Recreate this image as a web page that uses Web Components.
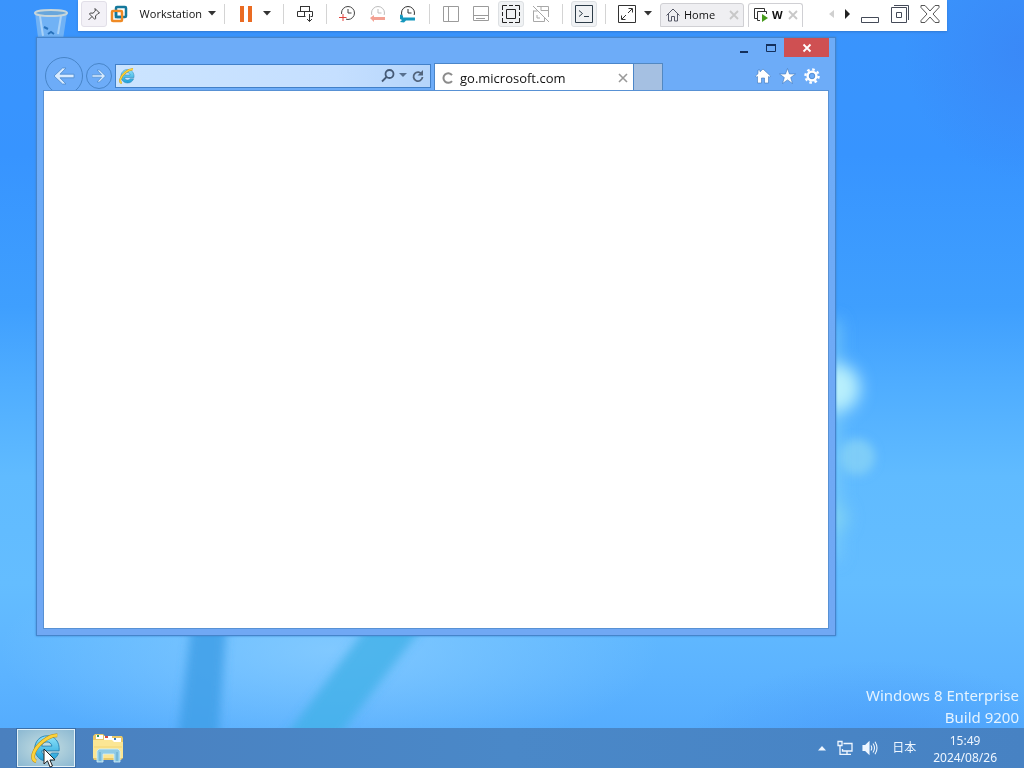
<!DOCTYPE html>
<html lang="en">
<head>
<meta charset="utf-8">
<title>Desktop</title>
<style>
  html, body {
    margin: 0;
    height: 100%;
    overflow: hidden;
  }
  body {
    font-family: "Open Sans", "Noto Sans", "Noto Sans CJK JP", sans-serif;
    font-size: 12px;
    line-height: 16px;
    color: #111;
  }
</style>
</head>
<body>
<desktop-screen>
  <recycle-bin></recycle-bin>
  <browser-window tab-title="go.microsoft.com"></browser-window>
  <vm-toolbar></vm-toolbar>
  <build-watermark slot="footer">
    <span>Windows 8 Enterprise</span>
    <span>Build 9200</span>
  </build-watermark>
  <task-bar slot="footer" time="15:49" date="2024/08/26" lang-label="日本"></task-bar>
</desktop-screen>

<script>
const BUTTON_RESET = `
  button {
    box-sizing: border-box;
    margin: 0;
    padding: 0;
    border: 0;
    background: none;
    font: inherit;
    color: inherit;
    display: flex;
    align-items: center;
    justify-content: center;
  }
  svg { display: block; flex: none; }
`;

// Internet Explorer logo, shared by the address bar and the task bar
const IE_LOGO = (size, id) => `
  <svg width="${size}" height="${size}" viewBox="0 0 32 32" aria-hidden="true">
    <defs>
      <linearGradient id="${id}" x1="0" y1="0" x2="0" y2="1">
        <stop offset="0" stop-color="#8fe3fa"/>
        <stop offset="1" stop-color="#1d9fd8"/>
      </linearGradient>
    </defs>
    <path d="M17 3C9.500 3 4 9 4 16.500S9.500 30 17 30c6 0 10.500-3.500 12.300-8.500h-7.300c-1 1.700-2.800 2.500-5 2.500-3.300 0-5.500-2-5.700-5H30C30.800 9.500 25.500 3 17 3zM11.400 14c.5-2.800 2.600-4.500 5.500-4.500s5 1.700 5.400 4.500z"
      fill="url(#${id})" stroke="#2583b4" stroke-width="1"/>
    <path d="M28 2.500C19 2 5 13 2.500 23c-.8 4 .5 6.500 3 7" fill="none" stroke="#b98a12" stroke-width="4"/>
    <path d="M28 2.500C19 2 5 13 2.500 23c-.8 4 .5 6.500 3 7" fill="none" stroke="#fcd23c" stroke-width="3"/>
  </svg>`;

class DesktopScreen extends HTMLElement {
  constructor() {
    super();
    this.attachShadow({ mode: "open" }).innerHTML = `
      <style>
        :host {
          display: flex;
          flex-direction: column;
          justify-content: flex-end;
          position: relative;
          height: 100vh;
          overflow: hidden;
        }
        .wallpaper {
          position: absolute;
          inset: 0;
          width: 100%;
          height: 100%;
        }
        footer {
          position: relative;
          display: flex;
          flex-direction: column;
        }
      </style>
      <svg class="wallpaper" viewBox="0 0 1024 768" preserveAspectRatio="none" aria-hidden="true">
        <defs>
          <linearGradient id="sky" x1="0" y1="0" x2="0" y2="1">
            <stop offset="0" stop-color="#3a94fc"/>
            <stop offset=".2" stop-color="#3794ff"/>
            <stop offset=".4" stop-color="#3f9ffe"/>
            <stop offset=".5" stop-color="#4fadff"/>
            <stop offset=".62" stop-color="#60bbff"/>
            <stop offset=".76" stop-color="#64bdff"/>
            <stop offset=".88" stop-color="#5cb3ff"/>
            <stop offset="1" stop-color="#50a8fd"/>
          </linearGradient>
          <radialGradient id="light">
            <stop offset="0" stop-color="#8ccfff" stop-opacity=".75"/>
            <stop offset="1" stop-color="#8ccfff" stop-opacity="0"/>
          </radialGradient>
          <radialGradient id="shade">
            <stop offset="0" stop-color="#3a86f6" stop-opacity=".8"/>
            <stop offset="1" stop-color="#3a86f6" stop-opacity="0"/>
          </radialGradient>
          <filter id="soft" x="-50%" y="-50%" width="200%" height="200%">
            <feGaussianBlur stdDeviation="5"/>
          </filter>
          <filter id="glow" x="-50%" y="-50%" width="200%" height="200%">
            <feGaussianBlur stdDeviation="8"/>
          </filter>
        </defs>
        <rect width="1024" height="768" fill="url(#sky)"/>
        <ellipse cx="330" cy="650" rx="330" ry="110" fill="url(#light)"/>
        <ellipse cx="1024" cy="50" rx="120" ry="130" fill="url(#shade)"/>
        <ellipse cx="880" cy="760" rx="200" ry="100" fill="url(#shade)" opacity=".5"/>
        <g filter="url(#soft)">
          <path d="M192 620H227L216 768H174z" fill="#3f9fe8" opacity=".85"/>
          <path d="M372 620H428L336 740 300 768H262z" fill="#42b0e8" opacity=".8"/>
          <circle cx="857" cy="457" r="18" fill="#7fcdf8"/>
        </g>
        <g filter="url(#glow)">
          <path d="M826 320h14v240h-14z" fill="#7fd0fa" opacity=".7"/>
          <ellipse cx="838" cy="388" rx="22" ry="24" fill="#b8effc"/>
          <circle cx="833" cy="518" r="15" fill="#7fd0f4"/>
        </g>
      </svg>
      <slot></slot>
      <footer><slot name="footer"></slot></footer>
    `;
  }
}

class RecycleBin extends HTMLElement {
  constructor() {
    super();
    this.attachShadow({ mode: "open" }).innerHTML = `
      <style>
        :host {
          display: block;
          position: absolute;
          left: 32px;
          top: 6px;
        }
        svg { display: block; }
      </style>
      <svg width="40" height="40" viewBox="0 0 40 40" role="img" aria-label="Recycle Bin">
        <path d="M3 7L7 40H30L35 7z" fill="#7fb9f2" opacity=".8"/>
        <path d="M8 10l3 20M29 10l-3 18" stroke="#a9d2f8" stroke-width="2"/>
        <ellipse cx="19" cy="7" rx="16" ry="3" fill="#68a6dc" stroke="#c8d6da" stroke-width="2"/>
        <path d="M12 21l4 2M16 28l3-2 3 2" fill="none" stroke="#2872bc" stroke-width="2"/>
      </svg>
    `;
  }
}

class ToolButton extends HTMLElement {
  connectedCallback() {
    if (this.shadowRoot) return;
    this.attachShadow({ mode: "open" }).innerHTML = `
      <style>
        ${BUTTON_RESET}
        :host {
          display: block;
          width: 26px;
          flex: none;
        }
        :host([narrow]) { width: 16px; }
        :host([wide]) { width: 30px; }
        button { width: 100%; height: 26px; border: 1px solid transparent; border-radius: 3px; }
        :host([pressed]) button { background: #f0f2f4; border-color: #dde0e3; }
        :host([pinned]) button { background: #f3f1f7; border-color: #e2dfe8; }
      </style>
      <button type="button" aria-label="${this.getAttribute("label")}"><slot></slot></button>
    `;
  }
}

class VmTab extends HTMLElement {
  connectedCallback() {
    if (this.shadowRoot) return;
    this.attachShadow({ mode: "open" }).innerHTML = `
      <style>
        ${BUTTON_RESET}
        :host {
          box-sizing: border-box;
          display: flex;
          align-items: center;
          flex: none;
          height: 24px;
          margin-top: 2px;
          padding: 0 4px 0 5px;
          border: 1px solid #d0d0d4;
          border-bottom: 0;
          border-radius: 3px 3px 0 0;
          background: #fff;
          font-size: 11px;
        }
        :host([inactive]) { background: #efeff2; border-bottom: 1px solid #d0d0d4; }
        .name { flex: 1; gap: 4px; justify-content: flex-start; }
      </style>
      <button class="name" type="button"><slot name="icon"></slot><slot></slot></button>
      <button type="button" aria-label="Close tab">
        <svg width="10" height="12" viewBox="0 0 10 12"><path d="M1 2l8 8M9 2l-8 8" stroke="#c8c8c8" stroke-width="1.800"/></svg>
      </button>
    `;
  }
}

class VmToolbar extends HTMLElement {
  constructor() {
    super();
    const caret = `<svg width="8" height="5" viewBox="0 0 8 5"><path d="M0 0h8L4 4.500z" fill="#333"/></svg>`;
    const clock = (hands) => `<circle cx="9" cy="8" r="6.500" fill="none" stroke="${hands}"/><path d="M9 4v4h3.500" fill="none" stroke="${hands}"/>`;
    this.attachShadow({ mode: "open" }).innerHTML = `
      <style>
        ${BUTTON_RESET}
        :host {
          box-sizing: border-box;
          position: absolute;
          left: 78px;
          right: 77px;
          top: 0;
          display: flex;
          align-items: center;
          padding: 0 2px 4px 3px;
          height: 31px;
          background: #fff;
          box-shadow: 0 1px 2px #2f79d2;
        }
        .menu { width: 109px; height: 26px; padding: 0 0 0 3px; justify-content: flex-start; gap: 6px; font-size: 11px; }
        .menu span { flex: 1; text-align: right; }
        .sep { flex: none; width: 1px; height: 20px; margin: 0 8px; background: #d4d4d4; }
        .group { display: flex; gap: 4px; }
        .tabs { display: flex; gap: 4px; margin-left: 4px; flex: 1; }
        .home { width: 84px; }
        .guest { width: 55px; font-weight: bold; }
      </style>
      <tool-button label="Pin toolbar" pinned>
        <svg width="14" height="14" viewBox="0 0 14 14" fill="none" stroke="#444"><path d="M8 1.500l4.500 4.500-1.500.5-2.500 2.500.2 2.500-1 .8L2.500 7l.8-1 2.700.2L8.300 4zM5 9.500L1.500 13"/></svg>
      </tool-button>
      <button class="menu" type="button">
        <svg width="18" height="18" viewBox="0 0 18 18" fill="none" stroke-width="2.500">
          <rect x="6" y="2" width="10" height="10" rx="1" stroke="#14789c"/>
          <rect x="2" y="6" width="10" height="10" rx="1" stroke="#ef8a25"/>
          <path d="M6 7v5h5" stroke="#14789c"/>
        </svg>
        <span>Workstation</span>
        ${caret}
      </button>
      <i class="sep"></i>
      <tool-button label="Suspend"><svg width="14" height="16" viewBox="0 0 14 16"><path d="M1 0h4v16H1zM9 0h4v16H9z" fill="#ea6b22"/></svg></tool-button>
      <tool-button label="Power options" narrow>${caret}</tool-button>
      <i class="sep"></i>
      <tool-button label="Send Ctrl+Alt+Del">
        <svg width="18" height="18" viewBox="0 0 18 18" fill="none" stroke="#333"><rect x="4.500" y="1.500" width="9" height="5"/><path d="M9.500 11.500h-8v-5h15v5h-2M8.500 6.500v5M13.500 9v7.500M11 14l2.500 2.500L16 14"/></svg>
      </tool-button>
      <i class="sep"></i>
      <div class="group">
        <tool-button label="Take snapshot">
          <svg width="18" height="18" viewBox="0 0 18 18">${clock("#444")}<path d="M0 9h7v7H0z" fill="#fff"/><path d="M4 9v7M0 12.500h7.500" stroke="#e0423c"/></svg>
        </tool-button>
        <tool-button label="Revert snapshot">
          <svg width="18" height="18" viewBox="0 0 18 18">${clock("#bdbdbd")}<path d="M0 10h18v8H0z" fill="#fff"/><path d="M1 13l4-3v2h11v3H5v2z" fill="#f3a193"/></svg>
        </tool-button>
        <tool-button label="Manage snapshots">
          <svg width="18" height="18" viewBox="0 0 18 18">${clock("#333")}<path d="M0 10h18v8H0z" fill="#fff"/><path d="M1 9.500l3 1v2h12v3H7l-2 2-4-.5 2-2-2-1z" fill="#1597bd"/></svg>
        </tool-button>
      </div>
      <i class="sep"></i>
      <div class="group">
        <tool-button label="Library"><svg width="18" height="18" viewBox="0 0 18 18" fill="none" stroke="#9b9b9b"><path d="M1.500 1.500h15v15h-15zM6.500 1.500v15"/></svg></tool-button>
        <tool-button label="Thumbnails"><svg width="18" height="18" viewBox="0 0 18 18" fill="none" stroke="#9b9b9b"><path d="M1.500 1.500h15v14h-15zM1.500 10.500h15M4 13.500h9"/></svg></tool-button>
        <tool-button label="Full screen" pressed><svg width="18" height="18" viewBox="0 0 18 18" fill="none" stroke="#222"><path d="M.5 5V.5H5M7 .5h4M13 .5h4.500V5M17.500 7v4M17.500 13v4.500H13M11 17.500H7M5 17.500H.5V13M.5 11V7M4.500 4.500h9v9h-9z"/></svg></tool-button>
        <tool-button label="Unity"><svg width="18" height="18" viewBox="0 0 18 18" fill="none" stroke="#a8a8a8"><path d="M5 1.500h11.500V12M9 1.500v4h7.500M1.500 5.500v11h11V13M1.500 6h4M5 10v3h3M1 1l16 16"/></svg></tool-button>
      </div>
      <i class="sep"></i>
      <tool-button label="Console view" pressed><svg width="18" height="18" viewBox="0 0 18 18" fill="none" stroke="#2d3c48"><path d="M.5.5h17v17H.5zM4 5.500l3.500 3L4 11.500M9 11.500h5"/></svg></tool-button>
      <i class="sep"></i>
      <tool-button label="Stretch guest"><svg width="18" height="18" viewBox="0 0 18 18" fill="none" stroke="#333"><path d="M.5.500h17v17H.5zM10.500 3.500h4v4M14 4l-4 4M3.500 10.500v4h4M4 14l4-4"/></svg></tool-button>
      <tool-button label="Stretch options" narrow>${caret}</tool-button>
      <div class="tabs">
        <vm-tab class="home" inactive>
          <svg slot="icon" width="14" height="14" viewBox="0 0 14 14" fill="none" stroke="#555866"><path d="M.5 7.500L7 1l6.500 6.500M2.500 6v7h3V8.500h3V13h3V6"/></svg>Home</vm-tab>
        <vm-tab class="guest">
          <svg slot="icon" width="14" height="14" viewBox="0 0 14 14" fill="none" stroke="#333"><path d="M3 10.500H.5V.5h10V3M6 12.500H3.500v-9h9V6"/><path d="M8 6l6 4-6 4z" fill="#459b1b" stroke="none"/></svg>W</vm-tab>
      </div>
      <tool-button label="Previous tab" narrow><svg width="5" height="8" viewBox="0 0 5 8"><path d="M5 0v8L0 4z" fill="#d0d0d0"/></svg></tool-button>
      <tool-button label="Next tab" narrow><svg width="5" height="10" viewBox="0 0 5 10"><path d="M0 0v10l5-5z" fill="#222"/></svg></tool-button>
      <tool-button label="Minimize" wide><svg width="18" height="18" viewBox="0 0 18 18" fill="none" stroke="#444a58"><path d="M.5 12.500h17v5H.5z"/></svg></tool-button>
      <tool-button label="Restore" wide><svg width="18" height="18" viewBox="0 0 18 18" fill="none" stroke="#444a58"><path d="M.5 2.500h15v15H.5zM3 .5h14.500V15M5.500 7.500h5v5h-5z"/></svg></tool-button>
      <tool-button label="Close" wide><svg width="20" height="20" viewBox="0 0 20 20" fill="none" stroke="#555"><path d="M1 1.500h4l5 5.500 5-5.500h4v2L13 10l6 6.500v2h-4L10 13l-5 5.500H1v-2L7 10 1 3.500z"/></svg></tool-button>
    `;
  }
}

class BrowserWindow extends HTMLElement {
  connectedCallback() {
    if (this.shadowRoot) return;
    this.attachShadow({ mode: "open" }).innerHTML = `
      <style>
        ${BUTTON_RESET}
        :host {
          box-sizing: border-box;
          position: absolute;
          left: 36px;
          right: 188px;
          top: 37px;
          bottom: 132px;
          display: flex;
          flex-direction: column;
          padding: 0 6px 6px;
          border: 1px solid #4584cb;
          background: linear-gradient(#6dacf8 60px, #70a8f4);
          box-shadow: 0 0 2px #3c82cc;
        }
        .caption {
          display: flex;
          justify-content: flex-end;
          height: 22px;
        }
        .caption button { width: 27px; height: 19px; }
        .caption .close { width: 45px; background: #cf5052; }
        .bar { display: flex; align-items: center; height: 31px; }
        .back, .forward { flex: none; border-radius: 50%; border: 1px solid #4885c8; }
        .back { width: 38px; height: 38px; margin: 0 3px 0 2px; }
        .forward { width: 26px; height: 26px; }
        .address {
          box-sizing: border-box;
          flex: 0 1 316px;
          display: flex;
          align-items: center;
          gap: 4px;
          height: 24px;
          margin: 0 3px;
          padding: 0 5px 0 3px;
          border: 1px solid #4280c8;
          background: linear-gradient(90deg, #cbe4ff, #c5dfff 70%, #b5d5fb);
        }
        .address input {
          flex: 1;
          min-width: 0;
          padding: 0;
          border: 0;
          outline: 0;
          background: none;
          font: inherit;
        }
        .tab {
          box-sizing: border-box;
          flex: 0 1 200px;
          align-self: flex-end;
          display: flex;
          align-items: center;
          height: 28px;
          padding: 0 4px 0 7px;
          border: 1px solid #4b86c9;
          border-bottom: 0;
          background: #fff;
        }
        .tab .name { flex: 1; gap: 6px; justify-content: flex-start; font-size: 13px; }
        .new-tab { align-self: flex-end; width: 29px; height: 28px; border: 1px solid #5288c2; border-left: 0; background: #a5c0e2; }
        .tools { flex: 1; display: flex; justify-content: flex-end; gap: 8px; padding-right: 9px; }
        main {
          flex: 1;
          margin: 0 1px 1px;
          background: #fff;
          outline: 1px solid #5891d4;
        }
      </style>
      <div class="caption">
        <button type="button" aria-label="Minimize"><svg width="12" height="12" viewBox="0 0 12 12"><path d="M2 9h8v2H2z" fill="#14305c"/></svg></button>
        <button type="button" aria-label="Maximize"><svg width="12" height="12" viewBox="0 0 12 12"><path d="M1.500 3h9v6.500h-9z" fill="none" stroke="#14305c"/><path d="M1 2h10v2H1z" fill="#14305c"/></svg></button>
        <button class="close" type="button" aria-label="Close"><svg width="10" height="10" viewBox="0 0 10 10"><path d="M1.500 1.500l7 7M8.500 1.500l-7 7" stroke="#fff" stroke-width="1.800"/></svg></button>
      </div>
      <div class="bar">
        <button class="back" type="button" aria-label="Back"><svg width="22" height="20" viewBox="0 0 22 20"><path d="M9.500 2H13L7 8.200H21v3.600H7L13 18H9.500L1 10z" fill="#d8ebff" stroke="#4c89cc" stroke-width=".8"/></svg></button>
        <button class="forward" type="button" aria-label="Forward"><svg width="14" height="14" viewBox="0 0 14 14"><path d="M7.500 1H5l4.500 4.800H0v2.400h9.500L5 13h2.500L13.500 7z" fill="#d8ebff" stroke="#4c89cc" stroke-width=".7"/></svg></button>
        <div class="address">
          ${IE_LOGO(16, "ie-small")}
          <input type="text" aria-label="Address">
          <button type="button" aria-label="Search"><svg width="14" height="14" viewBox="0 0 14 14" fill="none" stroke="#455a76" stroke-width="1.800"><circle cx="8.500" cy="5" r="4"/><path d="M5.500 8L1 12.500"/></svg></button>
          <button type="button" aria-label="Address history"><svg width="8" height="5" viewBox="0 0 8 5"><path d="M0 0h8L4 4z" fill="#58708f"/></svg></button>
          <button type="button" aria-label="Refresh"><svg width="14" height="14" viewBox="0 0 14 14"><path d="M11 5.500A4.500 4.500 0 1 0 11.500 8" fill="none" stroke="#52647c" stroke-width="1.800"/><path d="M12 1v5.500H6.500z" fill="#52647c"/></svg></button>
        </div>
        <div class="tab">
          <button class="name" type="button">
            <svg width="12" height="12" viewBox="0 0 12 12"><path d="M10 3A4.800 4.800 0 1 0 10 9" fill="none" stroke="#8b8b8b" stroke-width="2"/></svg>
            ${this.getAttribute("tab-title")}
          </button>
          <button type="button" aria-label="Close tab"><svg width="12" height="12" viewBox="0 0 12 12"><path d="M2 2l8 8M10 2l-8 8" stroke="#999" stroke-width="1.600"/></svg></button>
        </div>
        <button class="new-tab" type="button" aria-label="New tab"></button>
        <div class="tools">
          <button type="button" aria-label="Home"><svg width="16" height="16" viewBox="0 0 16 16"><path d="M8 1l7.500 7-1 1.200L13.500 8.500V15H9.500v-5h-3v5h-4V8.500l-1 .7-1-1.200L3 5.700V2h2v1.800z" fill="#fff" stroke="#3c76b8" stroke-width=".6"/></svg></button>
          <button type="button" aria-label="Favorites"><svg width="17" height="16" viewBox="0 0 17 16"><path d="M8.500.5l2 5.500h6l-4.800 3.500 1.800 6-5-3.600-5 3.600 1.800-6L.5 6h6z" fill="#fff" stroke="#3c76b8" stroke-width=".6"/></svg></button>
          <button type="button" aria-label="Tools"><svg width="16" height="16" viewBox="0 0 16 16" fill="none"><circle cx="8" cy="8" r="6.600" stroke="#fff" stroke-width="2.400" stroke-dasharray="2.590 2.590"/><circle cx="8" cy="8" r="4.300" stroke="#fff" stroke-width="2.600"/><circle cx="8" cy="8" r="2.800" stroke="#3c76b8" stroke-width=".6"/></svg></button>
        </div>
      </div>
      <main></main>
    `;
  }
}

class BuildWatermark extends HTMLElement {
  constructor() {
    super();
    this.attachShadow({ mode: "open" }).innerHTML = `
      <style>
        :host {
          display: flex;
          flex-direction: column;
          align-items: flex-end;
          padding-right: 5px;
          font-family: "Noto Sans", sans-serif;
          font-size: 15px;
          line-height: 22px;
          color: #e4f3ff;
        }
      </style>
      <slot></slot>
    `;
  }
}

class TaskBar extends HTMLElement {
  connectedCallback() {
    if (this.shadowRoot) return;
    this.attachShadow({ mode: "open" }).innerHTML = `
      <style>
        ${BUTTON_RESET}
        :host {
          display: flex;
          align-items: center;
          height: 40px;
          background: linear-gradient(90deg, #4a80bf, #4a88c8 50%, #4782c3);
          color: #eef6ff;
        }
        .app { width: 58px; height: 38px; border: 1px solid transparent; position: relative; }
        .apps { flex: 1; display: flex; gap: 4px; padding-left: 17px; }
        .running {
          border-color: #e3f1f8;
          outline: 1px solid #3b6fa8;
          background: radial-gradient(#c6dfe2, #8bb8d2);
        }
        .cursor { position: absolute; left: 25px; top: 18px; }
        .tray { display: flex; align-items: center; gap: 8px; margin-right: 17px; }
        .lang { margin-left: 6px; }
        .clock {
          flex-direction: column;
          margin-right: 27px;
          padding-top: 2px;
          font-family: "Noto Sans", sans-serif;
          line-height: 17px;
        }
      </style>
      <div class="apps">
        <button class="app running" type="button" aria-label="Internet Explorer">
          ${IE_LOGO(30, "ie-large")}
          <svg class="cursor" width="14" height="20" viewBox="0 0 14 20"><path d="M1 1v15l3.500-3.200L7 19l2.500-1-2.600-6H12z" fill="#fff" stroke="#222"/></svg>
        </button>
        <button class="app" type="button" aria-label="File Explorer">
          <svg width="34" height="30" viewBox="0 0 34 30">
            <path d="M2 3l2-2h8l2 2h17l1 2v20l-2 2H3l-1-2z" fill="#e8c868"/>
            <path d="M5 2h7v4H5z" fill="#fff"/><path d="M13 3h8v4h-8z" fill="#fff"/><path d="M21 5h9v4h-9z" fill="#fff"/>
            <path d="M6 2h2v2H6z" fill="#33975f"/><path d="M14 3h3v2h-3z" fill="#d94c3c"/><path d="M23 5h2v2h-2z" fill="#3478ba"/>
            <path d="M2 7h19l2 2h9v16H2z" fill="#fbe694"/>
            <path d="M3 14h28" stroke="#f2d572"/>
            <path d="M6 29V18l2-2h19l2 2v11h-6v-8H12v8z" fill="#8fcbe6" stroke="#d7f0f5" stroke-width=".8"/>
            <path d="M9 19v9M26 19v9" stroke="#5fa6ca"/>
          </svg>
        </button>
      </div>
      <div class="tray">
        <button type="button" aria-label="Show hidden icons"><svg width="12" height="6" viewBox="0 0 12 6"><path d="M2 5.500h8L6 1z" fill="#eef6ff"/></svg></button>
        <button type="button" aria-label="Network"><svg width="18" height="16" viewBox="0 0 18 16" fill="none" stroke="#eef6ff" stroke-width="1.300"><path d="M7.500 3.500H16v7.500H6.500V9M11 11v3M7 14.300h8M2 1.500h4v4H2zM4 5.500v8.800h3"/></svg></button>
        <button type="button" aria-label="Volume"><svg width="16" height="16" viewBox="0 0 16 16" fill="none" stroke="#eef6ff" stroke-width="1.100"><path d="M1 5.500h2.500L7 2v12l-3.500-3.500H1z" fill="#eef6ff"/><path d="M9 5.500q1.500 2.500 0 5M11 3.500q3 4.500 0 9M13 1.800q4 6.200 0 12.400"/></svg></button>
        <button class="lang" type="button">${this.getAttribute("lang-label")}</button>
      </div>
      <button class="clock" type="button">
        <time>${this.getAttribute("time")}</time>
        <time>${this.getAttribute("date")}</time>
      </button>
    `;
  }
}

customElements.define("desktop-screen", DesktopScreen);
customElements.define("recycle-bin", RecycleBin);
customElements.define("tool-button", ToolButton);
customElements.define("vm-tab", VmTab);
customElements.define("vm-toolbar", VmToolbar);
customElements.define("browser-window", BrowserWindow);
customElements.define("build-watermark", BuildWatermark);
customElements.define("task-bar", TaskBar);
</script>
</body>
</html>
